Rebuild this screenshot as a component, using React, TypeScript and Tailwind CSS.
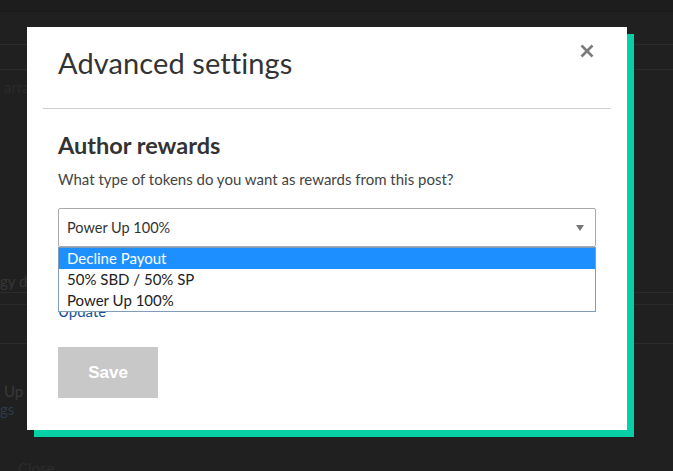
import { useState } from "react";

const options = ["Decline Payout", "50% SBD / 50% SP", "Power Up 100%"];

const App = () => {
  const [value] = useState("Power Up 100%");

  return (
    <div className="relative w-[673px] h-[471px] overflow-hidden bg-[#202020] font-['Lato',sans-serif]">
      {/* Pagina de fondo (oscurecida) */}
      <div className="flex flex-col text-[#333] text-[15px]">
        <div className="h-[12px] border-b border-[#1a1a1a] bg-[#1d1d1d]" />
        <div className="h-[33px] border-b border-[#2c2c2c]" />
        <div className="h-[25px] border-b border-[#2c2c2c]" />
        <div className="h-[26px] pl-[4px] pt-[10px] leading-none text-[#2b2b2b]">arrang</div>
        <div className="h-[176px]" />
        <div className="h-[21px] leading-[18px] text-[#363636] border-b border-[#2c2c2c]">gy di</div>
        <div className="h-[12px] border-b border-[#2a2a2a]" />
        <div className="h-[39px] border-b border-[#2c2c2c]" />
        <div className="h-[38px]" />
        <div className="pl-[4px] leading-[18px] text-[#3a3a3a]">Up 1</div>
        <div className="leading-[18px] text-[#2c3a4c]">gs</div>
        <div className="h-[41px]" />
        <div className="pl-[18px] text-[#2c2c2c] leading-[18px]">Close</div>
      </div>

      {/* Modal */}
      <div className="absolute left-[27px] top-[27px] w-[600px] h-[403px] bg-white shadow-[7px_7px_0_0_#07d0a6]">
        <div className="relative flex items-center h-[81px] pl-[31px] pb-[10px]">
          <h2 className="text-[29px] font-normal text-[#333] tracking-[0.1px]">Advanced settings</h2>
          <button className="absolute right-[33px] top-[17px] text-[#7b7b7b]">
            <svg width="14" height="14" viewBox="0 0 14 14">
              <path d="M1.5 1.5 L12.5 12.5 M12.5 1.5 L1.5 12.5" stroke="currentColor" strokeWidth="2.6" strokeLinecap="butt" />
            </svg>
          </button>
        </div>
        <div className="mx-[16px] h-px bg-[#cfcfcf]" />

        <div className="flex flex-col px-[31px] pt-[21px]">
          <h3 className="text-[23.5px] font-bold text-[#333] leading-[30px]">Author rewards</h3>
          <p className="mt-[9px] text-[15px] text-[#444] leading-[20px]">
            What type of tokens do you want as rewards from this post?
          </p>

          <div className="relative mt-[19px]">
            <div className="flex items-center justify-between h-[39px] border border-[#a9a9a9] rounded-[2px] pl-[8px] pr-[11px] text-[14.5px] text-[#333]">
              <span>{value}</span>
              <span className="w-0 h-0 border-l-[4px] border-r-[4px] border-t-[6px] border-l-transparent border-r-transparent border-t-[#777]" />
            </div>

            {/* Lista desplegada */}
            <ul className="absolute left-0 right-0 top-[39px] z-10 bg-white border border-[#7f9db9] text-[15px] text-[#222]">
              {options.map((o, i) => (
                <li
                  key={o}
                  className={
                    i === 0
                      ? "h-[21px] pl-[8px] leading-[21px] bg-[#1e8fff] text-white"
                      : "h-[21px] pl-[8px] leading-[20px]"
                  }
                >
                  {o}
                </li>
              ))}
            </ul>
          </div>

          <a className="mt-[54px] text-[15px] leading-[20px] text-[#1a5099] w-fit">Update</a>

          <button className="mt-[26px] w-[100px] h-[51px] bg-[#c8c8c8] text-white text-[17px] font-bold font-['Liberation_Sans',Arial,sans-serif]">
            Save
          </button>
        </div>
      </div>
    </div>
  );
};

export default App;
